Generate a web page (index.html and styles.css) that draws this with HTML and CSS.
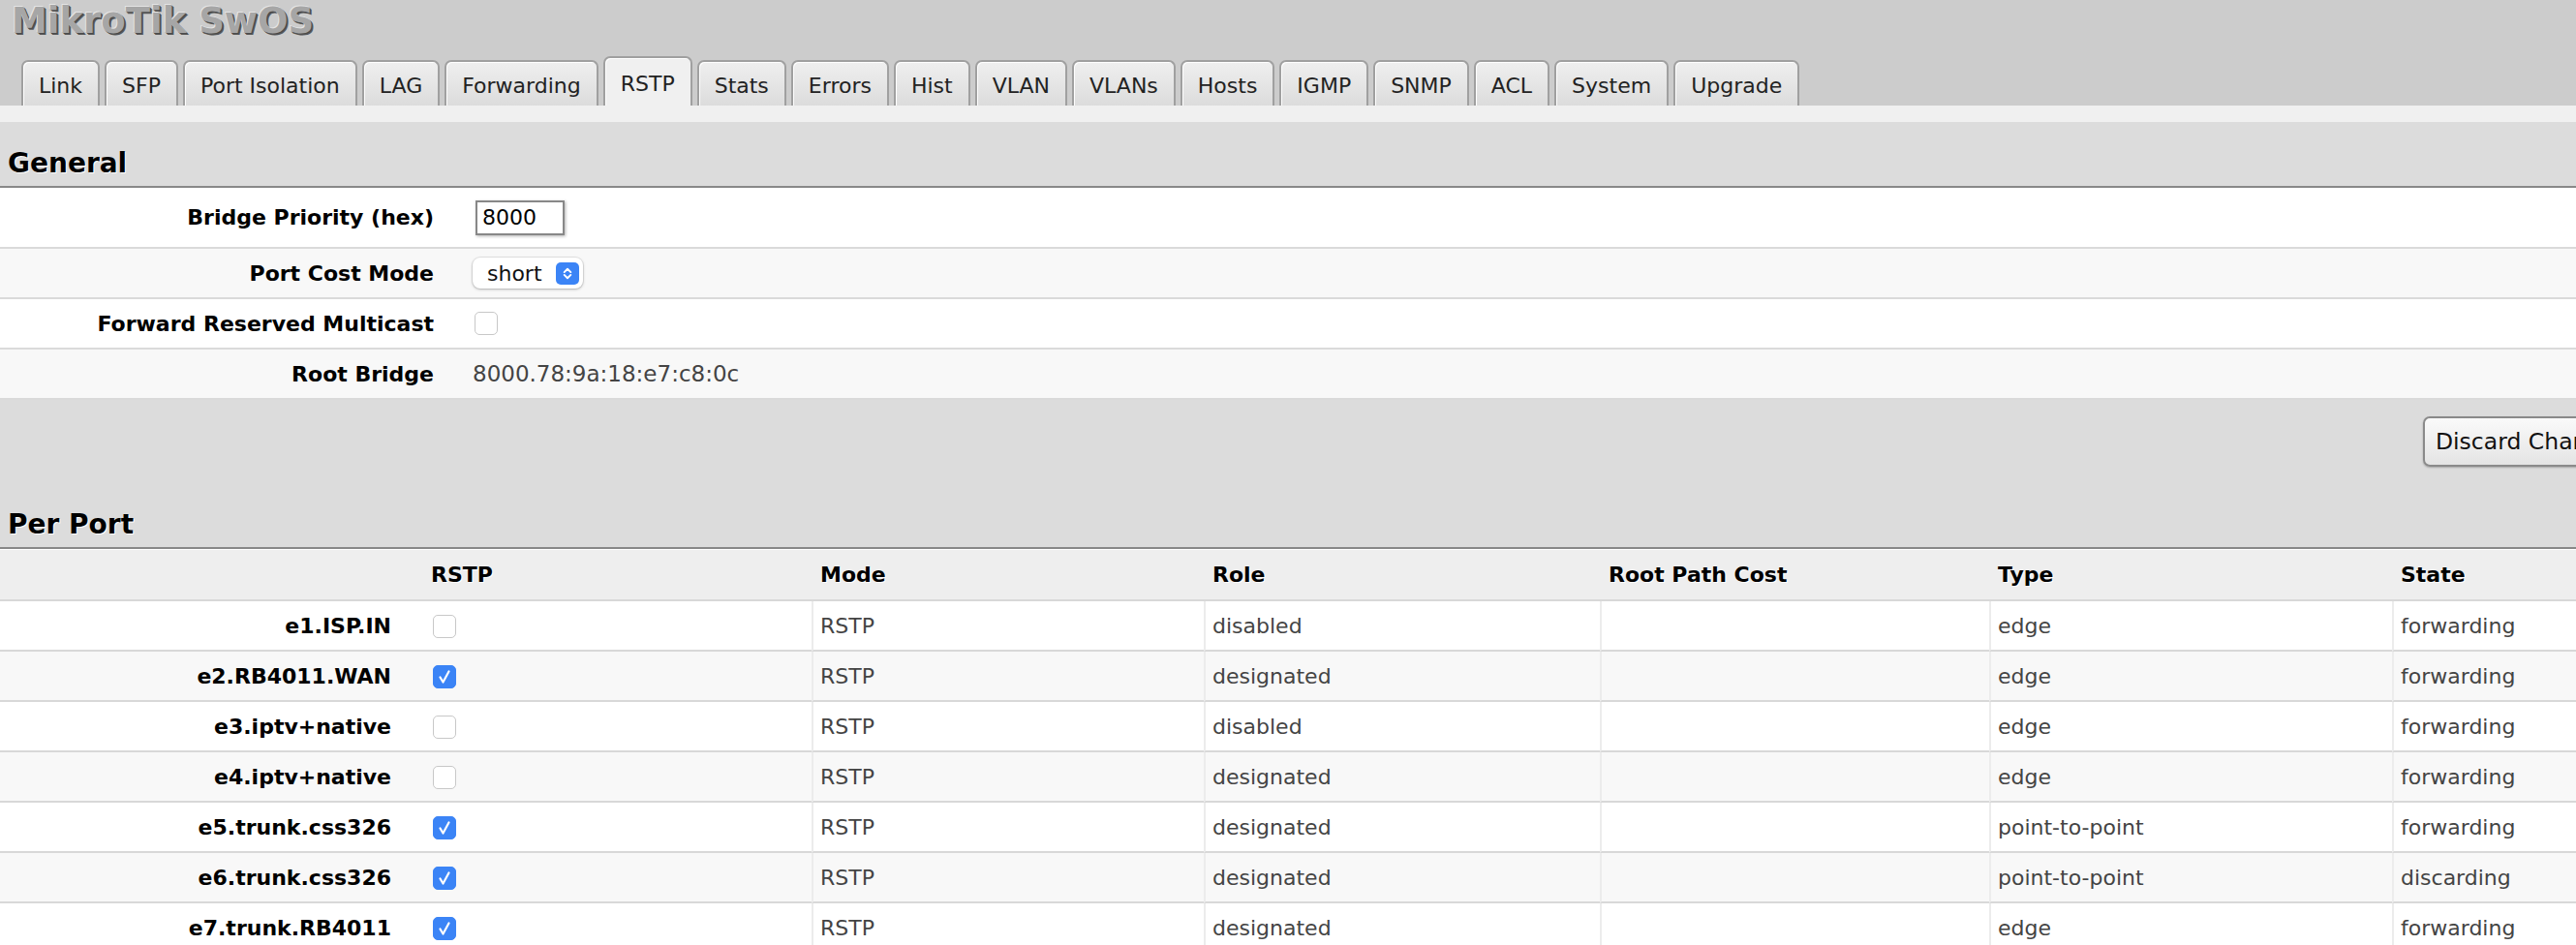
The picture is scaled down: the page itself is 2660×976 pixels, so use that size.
FILE: index.html
```html
<!DOCTYPE html>
<html>
<head>
  <meta charset="UTF-8">
  <title>MikroTik SwOS</title>
  <link rel="stylesheet" href="styles.css">
</head>
<body>
  <div id="page">
    <!-- Header + Tabs -->
    <div class="top">
      <div class="brand">MikroTik SwOS</div>
      <div class="tabs">
        <span class="tab">Link</span>
        <span class="tab">SFP</span>
        <span class="tab">Port Isolation</span>
        <span class="tab">LAG</span>
        <span class="tab">Forwarding</span>
        <span class="tab active">RSTP</span>
        <span class="tab">Stats</span>
        <span class="tab">Errors</span>
        <span class="tab">Hist</span>
        <span class="tab">VLAN</span>
        <span class="tab">VLANs</span>
        <span class="tab">Hosts</span>
        <span class="tab">IGMP</span>
        <span class="tab">SNMP</span>
        <span class="tab">ACL</span>
        <span class="tab">System</span>
        <span class="tab">Upgrade</span>
      </div>
    </div>
    <div class="strip"></div>

    <!-- General -->
    <div class="section-title">General</div>
    <div class="form">
      <div class="form-row tall">
        <span class="form-label">Bridge Priority (hex)</span>
        <span class="form-value"><input class="text-input" type="text" value="8000"></span>
      </div>
      <div class="form-row">
        <span class="form-label">Port Cost Mode</span>
        <span class="form-value">
          <span class="select">
            <span class="select-text">short</span>
            <span class="select-arrow">
              <svg viewBox="0 0 24 24" width="24" height="23"><path d="M8.5 10.5l3.5-3.5 3.5 3.5M8.5 13.5l3.5 3.5 3.5-3.5" fill="none" stroke="#fff" stroke-width="2" stroke-linecap="round" stroke-linejoin="round"/></svg>
            </span>
          </span>
        </span>
      </div>
      <div class="form-row">
        <span class="form-label">Forward Reserved Multicast</span>
        <span class="form-value"><span class="cb"></span></span>
      </div>
      <div class="form-row">
        <span class="form-label">Root Bridge</span>
        <span class="form-value bridge-id">8000.78:9a:18:e7:c8:0c</span>
      </div>
    </div>

    <!-- Buttons -->
    <div class="actions">
      <button class="btn">Discard Changes</button>
      <button class="btn">Apply All</button>
    </div>

    <!-- Per Port -->
    <div class="section-title spaced">Per Port</div>
    <table class="ports">
      <colgroup>
        <col style="width: 436px">
        <col style="width: 402px">
        <col style="width: 405px">
        <col style="width: 409px">
        <col style="width: 402px">
        <col style="width: 416px">
        <col style="width: 400px">
      </colgroup>
      <thead>
        <tr>
          <th></th>
          <th>RSTP</th>
          <th>Mode</th>
          <th>Role</th>
          <th>Root Path Cost</th>
          <th>Type</th>
          <th>State</th>
        </tr>
      </thead>
      <tbody>
        <tr>
          <td class="port">e1.ISP.IN</td>
          <td class="check"><span class="cb"></span></td>
          <td>RSTP</td><td>disabled</td><td></td><td>edge</td><td>forwarding</td>
        </tr>
        <tr>
          <td class="port">e2.RB4011.WAN</td>
          <td class="check"><span class="cb on"><svg viewBox="0 0 24 24" width="24" height="24"><path d="M7.5 12.5l3 5 6-11" fill="none" stroke="#fff" stroke-width="2.2" stroke-linecap="round" stroke-linejoin="round"/></svg></span></td>
          <td>RSTP</td><td>designated</td><td></td><td>edge</td><td>forwarding</td>
        </tr>
        <tr>
          <td class="port">e3.iptv+native</td>
          <td class="check"><span class="cb"></span></td>
          <td>RSTP</td><td>disabled</td><td></td><td>edge</td><td>forwarding</td>
        </tr>
        <tr>
          <td class="port">e4.iptv+native</td>
          <td class="check"><span class="cb"></span></td>
          <td>RSTP</td><td>designated</td><td></td><td>edge</td><td>forwarding</td>
        </tr>
        <tr>
          <td class="port">e5.trunk.css326</td>
          <td class="check"><span class="cb on"><svg viewBox="0 0 24 24" width="24" height="24"><path d="M7.5 12.5l3 5 6-11" fill="none" stroke="#fff" stroke-width="2.2" stroke-linecap="round" stroke-linejoin="round"/></svg></span></td>
          <td>RSTP</td><td>designated</td><td></td><td>point-to-point</td><td>forwarding</td>
        </tr>
        <tr>
          <td class="port">e6.trunk.css326</td>
          <td class="check"><span class="cb on"><svg viewBox="0 0 24 24" width="24" height="24"><path d="M7.5 12.5l3 5 6-11" fill="none" stroke="#fff" stroke-width="2.2" stroke-linecap="round" stroke-linejoin="round"/></svg></span></td>
          <td>RSTP</td><td>designated</td><td></td><td>point-to-point</td><td>discarding</td>
        </tr>
        <tr>
          <td class="port">e7.trunk.RB4011</td>
          <td class="check"><span class="cb on"><svg viewBox="0 0 24 24" width="24" height="24"><path d="M7.5 12.5l3 5 6-11" fill="none" stroke="#fff" stroke-width="2.2" stroke-linecap="round" stroke-linejoin="round"/></svg></span></td>
          <td>RSTP</td><td>designated</td><td></td><td>edge</td><td>forwarding</td>
        </tr>
      </tbody>
    </table>
  </div>
</body>
</html>
```

FILE: styles.css
```css
* {
  box-sizing: border-box;
}

html, body {
  margin: 0;
  padding: 0;
  background: #fff;
  font-family: "DejaVu Sans", Verdana, sans-serif;
  font-size: 22px;
  color: #000;
  overflow: hidden;
}

#page {
  width: 2870px;
}

/* header */
.top {
  background: #cccccc;
  padding-top: 1px;
}

.brand {
  height: 42px;
  line-height: 42px;
  padding-left: 12px;
  font-size: 37px;
  font-weight: bold;
  color: #a6a6a6;
  text-shadow: -1px -1px 0 #e4e4e4, 1px 1px 0 #4a4a4a, 2px 2px 0 #5a5a5a;
}

.tabs {
  height: 66px;
  display: flex;
  align-items: flex-end;
  gap: 5px;
  padding-left: 22px;
}

.tab {
  height: 47px;
  display: flex;
  align-items: center;
  padding: 3px 16px 0;
  border: 2px solid #a0a0a0;
  border-bottom: 0;
  border-radius: 7px 7px 0 0;
  background: linear-gradient(#efefef, #dcdcdc);
  box-shadow: inset 1px 1px 0 #fff;
  font-size: 22px;
  color: #222;
  white-space: nowrap;
}

.tab.active {
  height: 51px;
  background: #f0f0f0;
}

.strip {
  height: 17px;
  background: #f0f0f0;
}

/* sections */
.section-title {
  background: #dcdcdc;
  padding: 26px 8px 6px;
  line-height: 34px;
  font-size: 28px;
  font-weight: bold;
  border-bottom: 2px solid #888;
  text-shadow: 1px 1px 0 #fff;
}

.section-title.spaced {
  padding-top: 43px;
}

.form-row {
  display: flex;
  align-items: center;
  height: 52px;
  border-bottom: 2px solid #dadada;
  background: #fff;
}

.form-row:nth-child(even) {
  background: #f8f8f8;
}

.form-row.tall {
  height: 63px;
}

.form-label {
  width: 468px;
  padding-right: 20px;
  text-align: right;
  font-weight: bold;
}

.form-value {
  display: flex;
  align-items: center;
  padding-left: 20px;
  color: #444;
}

.bridge-id {
  font-size: 23px;
}

.text-input {
  margin-left: 3px;
  width: 92px;
  height: 36px;
  padding: 0 5px;
  border: 2px solid #888;
  background: #fff;
  box-shadow: 1px 1px 3px rgba(0, 0, 0, 0.3);
  font-family: "DejaVu Sans", Verdana, sans-serif;
  font-size: 22px;
  color: #000;
  outline: none;
}

.select {
  width: 114px;
  height: 32px;
  display: flex;
  align-items: center;
  justify-content: space-between;
  padding: 0 4px 0 15px;
  background: #fff;
  border-radius: 8px;
  box-shadow: 0 0 0 1px rgba(0, 0, 0, 0.07), 0 1px 3px rgba(0, 0, 0, 0.25);
  color: #111;
}

.select-arrow {
  width: 24px;
  height: 23px;
  display: flex;
  border-radius: 5px;
  background: #3b84f6;
}

.cb {
  width: 24px;
  height: 24px;
  display: inline-flex;
  margin-left: 2px;
  border: 1px solid #c8c8c8;
  border-radius: 5px;
  background: #fff;
  vertical-align: middle;
}

.cb.on {
  border-color: #3b84f6;
  background: #3b84f6;
}

.cb svg {
  margin: -1px;
}

/* buttons */
.actions {
  background: #dcdcdc;
  display: flex;
  justify-content: flex-end;
  gap: 10px;
  padding: 17px 5px 0 0;
}

.btn {
  height: 52px;
  padding: 0 11px;
  border: 2px solid #8a8a8a;
  border-radius: 7px;
  background: linear-gradient(#fafafa, #e4e4e4);
  box-shadow: 0 1px 2px rgba(0, 0, 0, 0.25);
  font-family: "DejaVu Sans", Verdana, sans-serif;
  font-size: 23.5px;
  color: #111;
  white-space: nowrap;
}

/* per port table */
.ports {
  width: 2870px;
  table-layout: fixed;
  border-collapse: separate;
  border-spacing: 0;
  border-top: 1px solid #fff;
}

.ports th {
  height: 53px;
  padding: 0 0 0 9px;
  background: #eeeeee;
  border-bottom: 2px solid #d8d8d8;
  text-align: left;
  font-weight: bold;
  text-shadow: 1px 1px 0 #fff;
}

.ports td {
  height: 52px;
  padding: 0 0 0 7px;
  border-bottom: 2px solid #d8d8d8;
  border-left: 2px solid #ececec;
  background: #fff;
  color: #444;
  white-space: nowrap;
}

.ports tbody tr:nth-child(even) td {
  background: #f8f8f8;
}

.ports td.port {
  border-left: 0;
  padding: 0 32px 0 0;
  text-align: right;
  font-weight: bold;
  color: #000;
}

.ports td.check {
  border-left: 0;
  padding-left: 9px;
}
```
